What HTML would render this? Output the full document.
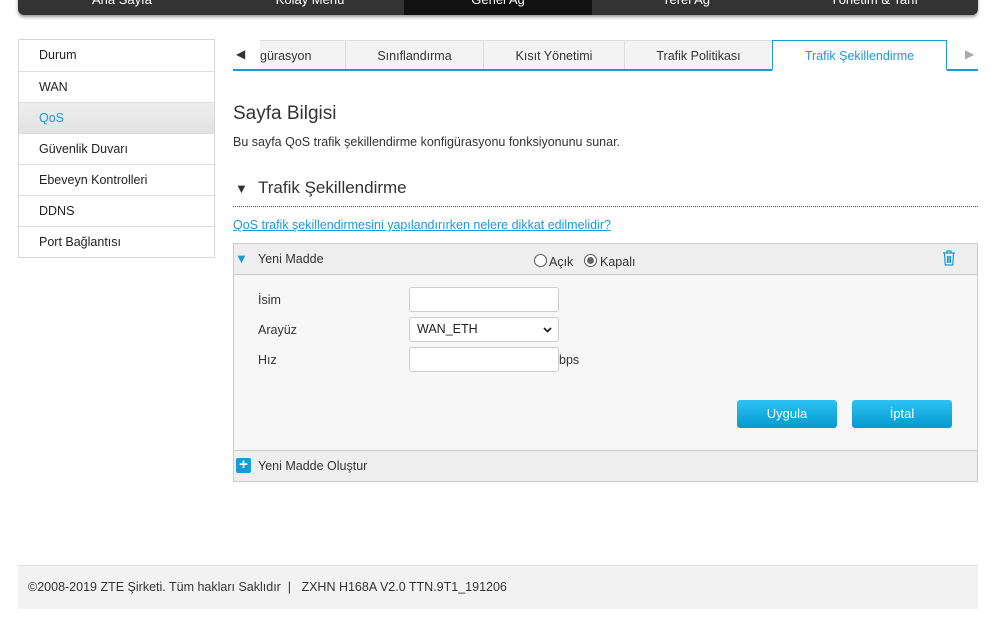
<!DOCTYPE html><html><head><meta charset="utf-8"><style>
*{box-sizing:border-box;margin:0;padding:0}
body{width:996px;height:622px;background:#fff;font-family:"Liberation Sans",sans-serif;font-size:12px;color:#333;position:relative;overflow:hidden}
.a{position:absolute}
.nav{left:18px;top:-6px;width:960px;height:21px;background:#333;border-radius:0 0 6px 6px;box-shadow:0 2px 3px #999}
.nav div{position:absolute;top:0;height:21px;width:188px;text-align:center;color:#fff;font-size:13px;line-height:11px}
.side{left:18px;top:39px;width:197px;border:1px solid #d6d6d6}
.side div{height:31px;line-height:31px;padding-left:20px;border-top:1px solid #ddd;font-size:12.5px;color:#222;background:#fff}
.side div:first-child{border-top:0}
.side .on{background:linear-gradient(#eee,#e2e2e2);color:#1a9ad6}
.tabs{left:233px;top:40px;width:745px;height:31px;border-bottom:2px solid #1a9ad6}
.tab{position:absolute;top:0;height:29px;line-height:30px;text-align:center;background:#f3f3f3;border:1px solid #ddd;border-bottom:0;font-size:12.5px;color:#333}
.tab.on{background:#fff;border:1px solid #1a9ad6;border-bottom:2px solid #fff;color:#1a9ad6;height:31px}
.inp{position:absolute;left:409px;width:150px;height:25px;border:1px solid #ccc;border-radius:3px;background:#fff}
.btn{position:absolute;top:400px;width:100px;height:28px;border-radius:3px;background:linear-gradient(#2dc2f3,#0599cf);color:#fff;text-align:center;line-height:28px;font-size:13px}
.lbl{position:absolute;left:258px;font-size:12.5px;color:#333}
</style></head><body>
<div class="a nav">
<div style="left:10px">Ana Sayfa</div><div style="left:198px">Kolay Menü</div><div style="left:386px;background:#111">Genel Ağ</div><div style="left:574px">Yerel Ağ</div><div style="left:762px">Yönetim &amp; Tanı</div>
</div>
<div class="a side"><div>Durum</div><div>WAN</div><div class="on">QoS</div><div>Güvenlik Duvarı</div><div>Ebeveyn Kontrolleri</div><div>DDNS</div><div>Port Bağlantısı</div></div>
<div class="a tabs">
<div class="a" style="left:3px;top:7px;font-size:12px;color:#333">◀</div>
<div class="tab" style="left:27px;width:86px;border-left:0;text-align:left">gürasyon</div>
<div class="tab" style="left:112px;width:139px">Sınıflandırma</div>
<div class="tab" style="left:250px;width:142px">Kısıt Yönetimi</div>
<div class="tab" style="left:391px;width:149px">Trafik Politikası</div>
<div class="tab on" style="left:539px;width:175px">Trafik Şekillendirme</div>
<div class="a" style="left:732px;top:7px;font-size:12px;color:#aaa">▶</div>
</div>
<div class="a" style="left:233px;top:103px;font-size:19px;color:#333">Sayfa Bilgisi</div>
<div class="a" style="left:233px;top:135px;font-size:12.5px;color:#333">Bu sayfa QoS trafik şekillendirme konfigürasyonu fonksiyonunu sunar.</div>
<div class="a" style="left:235px;top:181px;font-size:13px;color:#333">▼</div>
<div class="a" style="left:258px;top:178px;font-size:17px;color:#333">Trafik Şekillendirme</div>
<div class="a" style="left:233px;top:206px;width:745px;border-top:1px dotted #555"></div>
<div class="a" style="left:233px;top:218px;font-size:12.5px;color:#1a9ad6;text-decoration:underline">QoS trafik şekillendirmesini yapılandırırken nelere dikkat edilmelidir?</div>
<div class="a" style="left:233px;top:243px;width:745px;height:239px;border:1px solid #ccc;background:#f7f7f7"></div>
<div class="a" style="left:234px;top:244px;width:743px;height:31px;background:#eee;border-bottom:1px solid #ccc"></div>
<div class="a" style="left:235px;top:251px;color:#1a9ad6;font-size:13px">▼</div>
<div class="a" style="left:258px;top:252px;font-size:12.5px">Yeni Madde</div>
<div class="a" style="left:534px;top:254px;width:13px;height:13px;border:1px solid #555;border-radius:50%;background:#fff"></div>
<div class="a" style="left:549px;top:255px;font-size:12.5px">Açık</div>
<div class="a" style="left:584px;top:254px;width:13px;height:13px;border:1px solid #555;border-radius:50%;background:#fff"><div style="margin:2px;width:7px;height:7px;border-radius:50%;background:#666"></div></div>
<div class="a" style="left:600px;top:255px;font-size:12.5px">Kapalı</div>
<svg class="a" style="left:942px;top:250px" width="14" height="16" viewBox="0 0 14 16" fill="none" stroke="#1a9ad6" stroke-width="1.2"><path d="M1 3h12M5 3V1h4v2M2.5 3.5l.7 11.5h7.6l.7-11.5M5.5 6v7M7 6v7M8.5 6v7"/></svg>
<div class="lbl" style="top:293px">İsim</div><div class="inp" style="top:287px"></div>
<div class="lbl" style="top:323px">Arayüz</div><div class="inp" style="top:317px;padding:4px 7px;font-size:12.5px;color:#222">WAN_ETH<svg style="position:absolute;right:6px;top:9px" width="9" height="6" viewBox="0 0 9 6"><path d="M1 1l3.5 3.5L8 1" stroke="#222" stroke-width="1.8" fill="none"/></svg></div>
<div class="lbl" style="top:353px">Hız</div><div class="inp" style="top:347px"></div>
<div class="a" style="left:559px;top:353px;font-size:12.5px">bps</div>
<div class="btn" style="left:737px">Uygula</div><div class="btn" style="left:852px">İptal</div>
<div class="a" style="left:234px;top:450px;width:743px;height:31px;background:#eee;border-top:1px solid #ccc"></div>
<div class="a" style="left:236px;top:458px;width:15px;height:15px;background:#1a9ad6;border-radius:2px;color:#fff;font-weight:bold;text-align:center;line-height:14px;font-size:15px">+</div>
<div class="a" style="left:258px;top:459px;font-size:12.5px">Yeni Madde Oluştur</div>
<div class="a" style="left:18px;top:565px;width:960px;height:44px;background:#f2f2f2;border-top:1px solid #e2e2e2"></div>
<div class="a" style="left:28px;top:580px;font-size:12.5px;color:#333">©2008-2019 ZTE Şirketi. Tüm hakları Saklıdır &nbsp;| &nbsp; ZXHN H168A V2.0 TTN.9T1_191206</div>
</body></html>
